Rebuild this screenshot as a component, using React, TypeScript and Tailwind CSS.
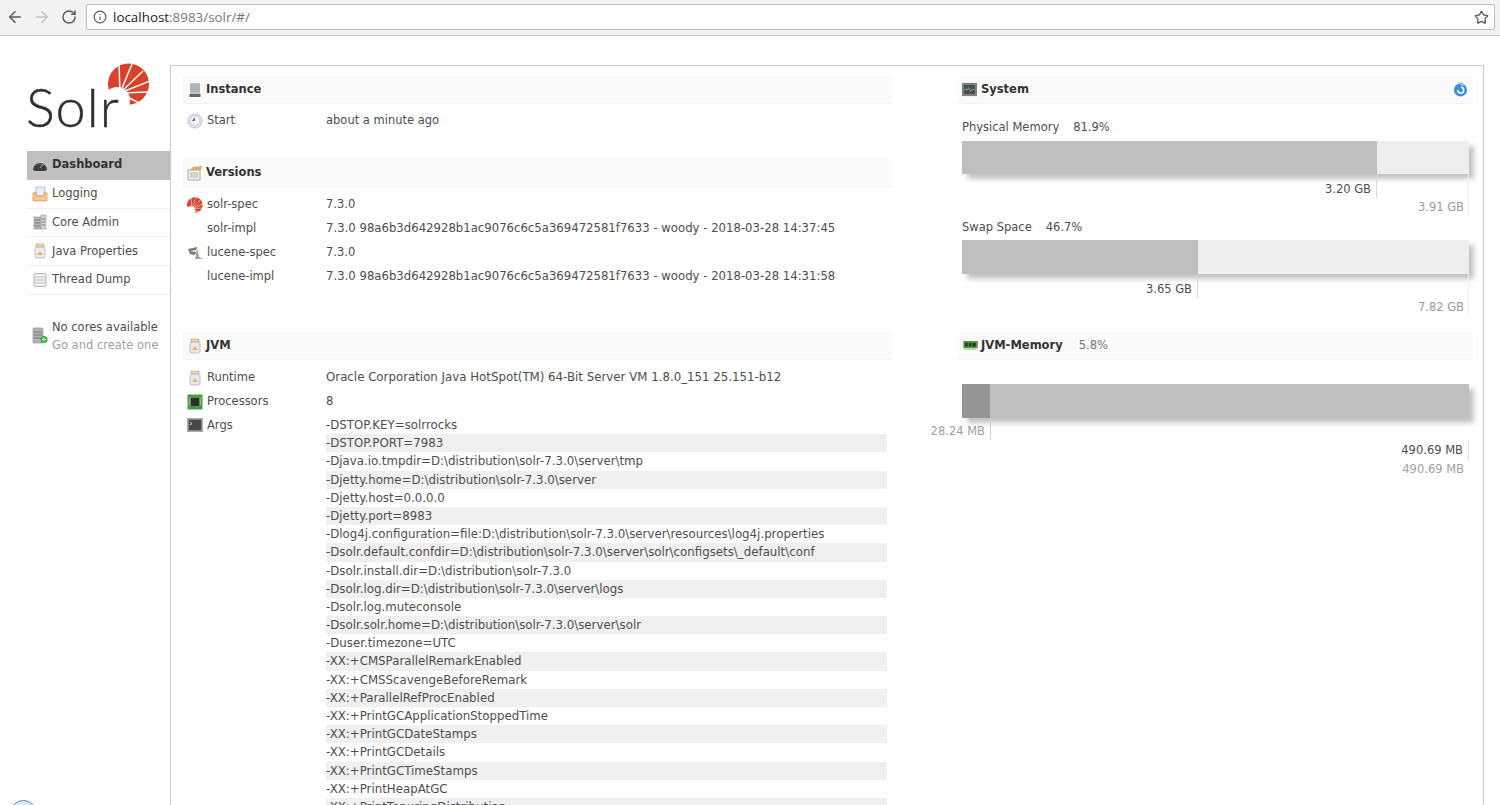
import { ArrowLeft, ArrowRight, Info, RotateCw, Star } from "lucide-react";
import type { ReactNode } from "react";

const args = [
	"-DSTOP.KEY=solrrocks",
	"-DSTOP.PORT=7983",
	"-Djava.io.tmpdir=D:\\distribution\\solr-7.3.0\\server\\tmp",
	"-Djetty.home=D:\\distribution\\solr-7.3.0\\server",
	"-Djetty.host=0.0.0.0",
	"-Djetty.port=8983",
	"-Dlog4j.configuration=file:D:\\distribution\\solr-7.3.0\\server\\resources\\log4j.properties",
	"-Dsolr.default.confdir=D:\\distribution\\solr-7.3.0\\server\\solr\\configsets\\_default\\conf",
	"-Dsolr.install.dir=D:\\distribution\\solr-7.3.0",
	"-Dsolr.log.dir=D:\\distribution\\solr-7.3.0\\server\\logs",
	"-Dsolr.log.muteconsole",
	"-Dsolr.solr.home=D:\\distribution\\solr-7.3.0\\server\\solr",
	"-Duser.timezone=UTC",
	"-XX:+CMSParallelRemarkEnabled",
	"-XX:+CMSScavengeBeforeRemark",
	"-XX:+ParallelRefProcEnabled",
	"-XX:+PrintGCApplicationStoppedTime",
	"-XX:+PrintGCDateStamps",
	"-XX:+PrintGCDetails",
	"-XX:+PrintGCTimeStamps",
	"-XX:+PrintHeapAtGC",
	"-XX:+PrintTenuringDistribution",
];

const SolrSun = ({ className }: { className: string }) => (
	<svg viewBox="0 0 42 42" className={className}>
		<circle cx="20.5" cy="21" r="20.5" fill="#d9412b" />
		<g stroke="#fff" strokeWidth="1.5">
			<path d="M12 30 L11 0" />
			<path d="M12 30 L24 1" />
			<path d="M12 30 L35 8" />
			<path d="M12 30 L42 18" />
			<path d="M12 30 L41 29" />
			<path d="M12 30 L31 40" />
		</g>
		<circle cx="9" cy="37" r="13" fill="#fff" />
		<path d="M0 26 L21 42 L0 42 Z" fill="#fff" />
	</svg>
);

const ServerIcon = () => (
	<svg viewBox="0 0 16 16" className="size-4">
		<rect x="3" y="1" width="10" height="11" fill="#c4c4c4" />
		<path d="M3 3h10M3 5h10M3 7h10M3 9h10" stroke="#a0a0a0" />
		<rect x="2.5" y="12" width="11" height="3" fill="#666" />
	</svg>
);

const ClockIcon = () => (
	<svg viewBox="0 0 16 16" className="size-4">
		<circle cx="8" cy="8" r="7" fill="#dfe3ec" stroke="#c0c4cc" />
		<circle cx="8" cy="7.5" r="4.8" fill="#f7f8fb" stroke="#b8bccb" strokeWidth="0.6" />
		<path d="M8 4v4H4.5z" fill="#6577b0" />
	</svg>
);

const NotesIcon = () => (
	<svg viewBox="0 0 16 16" className="size-4">
		<rect x="1" y="5" width="12" height="10" fill="#f5f2e8" stroke="#a8a8a0" />
		<path d="M3 8h8M3 10h8M3 12h8" stroke="#b0b0a8" />
		<path d="M3 5 L6 2 L15 1 L14 5 Z" fill="#e0a868" />
	</svg>
);

const FeatherIcon = () => (
	<svg viewBox="0 0 16 16" className="size-4">
		<path d="M1 4 L10 2 L9 5 L3 6 L9 7 L8 10 L3 9 Z" fill="#6f7f74" />
		<path d="M10 2 L12 12 L16 14 H8 L9 10 Z" fill="#98a59c" />
	</svg>
);

const JarIcon = () => (
	<svg viewBox="0 0 16 16" className="size-4">
		<rect x="4" y="1" width="8" height="3" fill="#e8d9a8" stroke="#b8a878" strokeWidth="0.6" />
		<rect x="3" y="4" width="10" height="11" rx="2" fill="#e8eaf0" stroke="#b0b4c0" strokeWidth="0.8" />
		<path d="M5 12 L8 8 L11 12 Z" fill="#e6b860" />
	</svg>
);

const ChipIcon = () => (
	<svg viewBox="0 0 16 16" className="size-4">
		<rect x="0.5" y="0.5" width="15" height="15" fill="#4b9a4a" />
		<rect x="4" y="4" width="8" height="8" fill="#2c302c" />
		<path d="M2 4h1M2 6h1M2 8h1M2 10h1M13 4h1M13 6h1M13 8h1M13 10h1" stroke="#c8e0b0" />
	</svg>
);

const TerminalIcon = () => (
	<svg viewBox="0 0 16 16" className="size-4">
		<rect x="0.5" y="1.5" width="15" height="13" fill="#8a8a8a" stroke="#aaa" />
		<rect x="2" y="3" width="12" height="10" fill="#484848" />
		<path d="M3 5l2 1.5L3 8" stroke="#ccc" fill="none" />
	</svg>
);

const MonitorIcon = () => (
	<svg viewBox="0 0 16 16" className="-ml-px size-[15px]">
		<rect x="0.5" y="1.5" width="15" height="13" fill="#8a8f8c" stroke="#777" />
		<rect x="2" y="3" width="12" height="10" fill="#4a4f4c" />
		<path d="M3 8h3l1-2 2 4 1-2h3" stroke="#6fbf8f" fill="none" />
	</svg>
);

const RamIcon = () => (
	<svg viewBox="0 0 16 10" className="w-[15px] h-[9px]">
		<rect width="16" height="8" fill="#4f9a45" />
		<path d="M2 2h3v4H2zM6 2h3v4H6zM10 2h4v4h-4z" fill="#25401f" />
		<path d="M1 9h14" stroke="#8fb878" />
	</svg>
);

const DashIcon = () => (
	<svg viewBox="0 0 16 16" className="size-4">
		<path d="M1 13 A7 7 0 0 1 15 13 L13 14 H3 Z" fill="#3d3d3f" />
		<path d="M4 9 A5 5 0 0 1 12 9" stroke="#8c4a4a" fill="none" />
		<path d="M8 11 L11 7" stroke="#aaa" />
	</svg>
);

const LogIcon = () => (
	<svg viewBox="0 0 16 16" className="size-4">
		<rect x="4" y="1" width="9" height="9" fill="#e6eff9" stroke="#9fb3d0" strokeWidth="0.7" />
		<path d="M1 7 L4 6 V10 H12 V6 L15 7 V15 H1 Z" fill="#f3c78f" stroke="#d09a58" strokeWidth="0.7" />
	</svg>
);

const CoreIcon = () => (
	<svg viewBox="0 0 16 16" className="size-4">
		<rect x="2" y="3" width="7" height="12" fill="#b8b8b8" stroke="#8c8c8c" strokeWidth="0.6" />
		<rect x="9" y="1" width="5" height="14" fill="#d4d4d4" stroke="#999" strokeWidth="0.6" />
		<path d="M3 6h5M3 9h5M3 12h5M10 5h3M10 8h3M10 11h3" stroke="#777" />
	</svg>
);

const DumpIcon = () => (
	<svg viewBox="0 0 16 16" className="size-4">
		<rect x="2" y="1.5" width="12" height="13" rx="2" fill="#f0f0f0" stroke="#b8b8b8" />
		<path d="M2 5h12M2 8h12M2 11h12" stroke="#c0c0c0" />
	</svg>
);

const NoCoreIcon = () => (
	<svg viewBox="0 0 16 18" className="w-4 h-[18px]">
		<rect x="1" y="1" width="10" height="15" rx="1" fill="#b4b4b4" stroke="#888" strokeWidth="0.6" />
		<path d="M2 5h8M2 8h8M2 11h8" stroke="#777" />
		<circle cx="12" cy="12.5" r="3.5" fill="#38b03a" />
		<path d="M10 12.5h4M12 10.5v4" stroke="#e8ffe8" />
	</svg>
);

const RefreshIcon = () => (
	<svg viewBox="0 0 16 16" className="size-[15px]">
		<circle cx="8" cy="8.5" r="7" fill="#3d8fd8" />
		<path d="M5 0.5h6v5z" fill="#8cc0ee" />
		<path d="M5 8.5a3.2 3.2 0 1 0 4-3" stroke="#fff" strokeWidth="1.6" fill="none" />
	</svg>
);

const navItems: { label: string; icon: ReactNode; active?: boolean }[] = [
	{ label: "Dashboard", icon: <DashIcon />, active: true },
	{ label: "Logging", icon: <LogIcon /> },
	{ label: "Core Admin", icon: <CoreIcon /> },
	{ label: "Java Properties", icon: <JarIcon /> },
	{ label: "Thread Dump", icon: <DumpIcon /> },
];

const SectionHeader = ({ icon, children, right }: { icon: ReactNode; children: ReactNode; right?: ReactNode }) => (
	<div className="flex h-[28px] items-center justify-between border-b border-[#f2f2f2] bg-[#fafafa] px-[5px]">
		<div className="flex items-center gap-[3px]">
			<span className="flex w-[16px] justify-center">{icon}</span>
			{children}
		</div>
		{right}
	</div>
);

const Row = ({ icon, label, value, wide }: { icon?: ReactNode; label: string; value: string; wide?: boolean }) => (
	<div className="flex h-[24px] items-center">
		<span className="flex w-[25px] justify-center pl-[1px]">{icon}</span>
		<span className="w-[119px] text-[#4d4d4d]">{label}</span>
		<span className={`text-[#4d4d4d] ${wide ? "text-[11.7px]" : ""}`}>{value}</span>
	</div>
);

const MemoryLabels = ({ used, total, usedWidth }: { used: string; total: string; usedWidth: string }) => (
	<div className="h-[42px] w-[507px] border-r border-[#f0f0f0] pt-px">
		<div className={`h-[23px] border-r border-[#d8d8d8] pr-[5px] pt-[5px] text-right leading-[18px] text-[#4d4d4d] ${usedWidth}`}>
			{used}
		</div>
		<div className="pr-[4px] text-right leading-[18px] text-[#9a9a9a]">{total}</div>
	</div>
);

const Bar = ({ fill, height }: { fill: string; height: string }) => (
	<div className={`flex w-[507px] bg-[#eeeeee] shadow-[5px_5px_5px_#c4c4c4] ${height}`}>
		<div className={`h-full bg-[#bfbfbf] ${fill}`} />
	</div>
);

export default function App() {
	return (
		<div className="relative h-[805px] overflow-hidden bg-white text-[11.5px] text-[#4d4d4d] [font-family:'DejaVu_Sans',sans-serif]">
			<div className="flex h-[36px] items-center border-b border-[#c8c8c8] bg-[#f2f2f2] pb-[1px]">
				<div className="flex w-[86px] items-center text-[#5a5a5a]">
					<ArrowLeft className="ml-[6px] size-[18px]" strokeWidth={2} />
					<ArrowRight className="ml-[9px] size-[18px] text-[#c4c4c4]" strokeWidth={2} />
					<RotateCw className="ml-[10px] size-[16px]" strokeWidth={2.2} />
				</div>
				<div className="mr-[5px] flex h-[26px] flex-1 items-center rounded-[2px] border border-[#c0c0c0] bg-white pl-[6px] pr-[5px] shadow-[0_0_1px_#ddd]">
					<Info className="size-[14px] text-[#555]" />
					<span className="ml-[6px] text-[13.4px] text-[#222] [font-family:'Open_Sans',sans-serif]">
						localhost<span className="text-[#777]">:8983/solr/#/</span>
					</span>
					<Star className="ml-auto size-[15px] text-[#555]" strokeWidth={2} />
				</div>
			</div>

			<div className="flex pl-[27px] pr-[16px] pt-[29px]">
				<aside className="w-[143px] shrink-0">
					<div className="relative h-[86px]">
						<SolrSun className="absolute left-[81px] top-[-2px] size-[42px]" />
						<span className="absolute left-[-1px] top-[11px] text-[54px] font-light leading-[62px] tracking-[1px] text-[#2f2f33] [-webkit-text-stroke:0.4px_#2f2f33] [font-family:'Lato',sans-serif]">
							Solr
						</span>
					</div>
					<nav>
						{navItems.map((item) => (
							<div
								key={item.label}
								className={`flex h-[28.8px] items-center gap-[4px] border-b pl-[5px] ${item.active ? "border-transparent bg-[#bfbfbf] font-bold text-[#333]" : "border-[#f0f0f0] text-[#4d4d4d]"}`}
							>
								{item.icon}
								{item.label}
							</div>
						))}
					</nav>
					<div className="mt-[23px] flex items-center gap-[4px] pl-[5px] leading-[18px]">
						<NoCoreIcon />
						<div>
							<div className="text-[#4d4d4d]">No cores available</div>
							<div className="text-[#a0a0a0]">Go and create one</div>
						</div>
					</div>
				</aside>

				<main className="flex h-[800px] flex-1 gap-[65px] border border-[#c8c8c8] pl-[11px] pt-[10px]">
					<div className="w-[710px] shrink-0">
						<SectionHeader icon={<ServerIcon />}>
							<h2 className="font-bold text-[#333]">Instance</h2>
						</SectionHeader>
						<div className="pt-[5px]">
							<Row icon={<ClockIcon />} label="Start" value="about a minute ago" />
						</div>

						<div className="mt-[26px]">
							<SectionHeader icon={<NotesIcon />}>
								<h2 className="font-bold text-[#333]">Versions</h2>
							</SectionHeader>
						</div>
						<div className="pt-[6px]">
							<Row icon={<SolrSun className="size-4" />} label="solr-spec" value="7.3.0" />
							<Row wide label="solr-impl" value="7.3.0 98a6b3d642928b1ac9076c6c5a369472581f7633 - woody - 2018-03-28 14:37:45" />
							<Row icon={<FeatherIcon />} label="lucene-spec" value="7.3.0" />
							<Row wide label="lucene-impl" value="7.3.0 98a6b3d642928b1ac9076c6c5a369472581f7633 - woody - 2018-03-28 14:31:58" />
						</div>

						<div className="mt-[43px]">
							<SectionHeader icon={<JarIcon />}>
								<h2 className="font-bold text-[#333]">JVM</h2>
							</SectionHeader>
						</div>
						<div className="pt-[6px]">
							<div className="flex h-[24px] items-center">
								<span className="flex w-[25px] justify-center pl-[1px]">
									<JarIcon />
								</span>
								<span className="w-[119px]">Runtime</span>
								<span className="text-[11.8px]">Oracle Corporation Java HotSpot(TM) 64-Bit Server VM 1.8.0_151 25.151-b12</span>
							</div>
							<Row icon={<ChipIcon />} label="Processors" value="8" />
							<div className="flex pt-[2px]">
								<span className="flex h-[18px] w-[25px] items-center justify-center pl-[1px]">
									<TerminalIcon />
								</span>
								<span className="w-[119px] leading-[18px]">Args</span>
								<div className="w-[561px] text-[11.8px]">
									{args.map((arg, i) => (
										<div key={arg} className={`h-[18.2px] leading-[18.2px] ${i % 2 === 1 ? "bg-[#f0f0f0]" : ""}`}>
											{arg}
										</div>
									))}
								</div>
							</div>
						</div>
					</div>

					<div className="w-[516px] shrink-0">
						<SectionHeader
							icon={<MonitorIcon />}
							right={<RefreshIcon />}
						>
							<h2 className="font-bold text-[#333]">System</h2>
						</SectionHeader>
						<div className="pl-[5px]">
							<div className="flex gap-[14px] pt-[14px] leading-[18px]">
								<span>Physical Memory</span>
								<span>81.9%</span>
							</div>
							<div className="mt-[5px]">
								<Bar fill="w-[415px]" height="h-[33px]" />
							</div>
							<MemoryLabels used="3.20 GB" total="3.91 GB" usedWidth="w-[415px]" />
							<div className="flex gap-[14px] pt-[2px] leading-[18px]">
								<span>Swap Space</span>
								<span>46.7%</span>
							</div>
							<div className="mt-[4px]">
								<Bar fill="w-[236px]" height="h-[34px]" />
							</div>
							<MemoryLabels used="3.65 GB" total="7.82 GB" usedWidth="w-[236px]" />
						</div>

						<div className="mt-[16px]">
							<SectionHeader icon={<RamIcon />}>
								<h2 className="font-bold text-[#333]">JVM-Memory</h2>
								<span className="ml-[13px] text-[#777]">5.8%</span>
							</SectionHeader>
						</div>
						<div className="pl-[5px] pt-[24px]">
							<div className="flex h-[34px] w-[507px] bg-[#bfbfbf] shadow-[5px_5px_5px_#c4c4c4]">
								<div className="h-full w-[28px] bg-[#959595]" />
							</div>
							<div className="relative h-[22px] w-[507px]">
								<div className="h-[22px] w-[29px] border-r border-[#d0d0d0]" />
								<span className="absolute right-[484px] top-[4px] whitespace-nowrap leading-[18px] text-[#a0a0a0]">28.24 MB</span>
							</div>
							<div className="h-[20px] w-[507px] border-r border-[#e0e0e0] pr-[5px] pt-px text-right leading-[18px]">490.69 MB</div>
							<div className="w-[507px] pr-[5px] text-right leading-[18px] text-[#a0a0a0]">490.69 MB</div>
						</div>
					</div>
				</main>
			</div>

			<div className="absolute left-[10px] top-[800px] size-[27px] rounded-full border border-[#5c87a8] bg-[#dfe9f1]" />
		</div>
	);
}
